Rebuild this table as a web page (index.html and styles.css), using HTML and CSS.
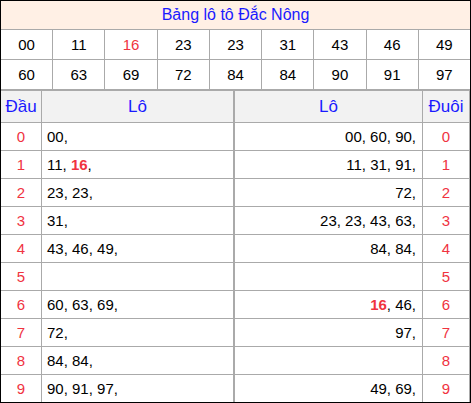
FILE: index.html
```html
<!DOCTYPE html>
<html>
<head>
<meta charset="utf-8">
<link rel="stylesheet" href="styles.css">
</head>
<body>
<div class="box">
  <div class="title">Bảng lô tô Đắc Nông</div>
  <div class="nums">
    <div>00</div><div>11</div><div class="red">16</div><div>23</div><div>23</div><div>31</div><div>43</div><div>46</div><div>49</div>
    <div>60</div><div>63</div><div>69</div><div>72</div><div>84</div><div>84</div><div>90</div><div>91</div><div>97</div>
  </div>
  <div class="lo">
    <div class="hd">Đầu</div><div class="hd">Lô</div><div class="hd">Lô</div><div class="hd">Đuôi</div>

    <div class="k">0</div><div class="l">00,</div><div class="r">00, 60, 90,</div><div class="k">0</div>
    <div class="k">1</div><div class="l">11, <b>16</b>,</div><div class="r">11, 31, 91,</div><div class="k">1</div>
    <div class="k">2</div><div class="l">23, 23,</div><div class="r">72,</div><div class="k">2</div>
    <div class="k">3</div><div class="l">31,</div><div class="r">23, 23, 43, 63,</div><div class="k">3</div>
    <div class="k">4</div><div class="l">43, 46, 49,</div><div class="r">84, 84,</div><div class="k">4</div>
    <div class="k">5</div><div class="l"></div><div class="r"></div><div class="k">5</div>
    <div class="k">6</div><div class="l">60, 63, 69,</div><div class="r"><b>16</b>, 46,</div><div class="k">6</div>
    <div class="k">7</div><div class="l">72,</div><div class="r">97,</div><div class="k">7</div>
    <div class="k">8</div><div class="l">84, 84,</div><div class="r"></div><div class="k">8</div>
    <div class="k">9</div><div class="l">90, 91, 97,</div><div class="r">49, 69,</div><div class="k">9</div>
  </div>
</div>
</body>
</html>
```
FILE: styles.css
```css
html, body {
  margin: 0;
  padding: 0;
  background: #fff;
}
body {
  font-family: "Liberation Sans", Arial, sans-serif;
  color: #000;
}
.box {
  width: 469px;
  height: 401px;
  border: 1px solid #000;
  overflow: hidden;
  background: #aaa;
}
.title {
  height: 28px;
  line-height: 28px;
  background: #fff0e5;
  color: #1a1aff;
  font-size: 16px;
  text-align: center;
  margin-bottom: 1px;
}
.nums {
  display: grid;
  grid-template-columns: repeat(9, 1fr);
  grid-auto-rows: 29px;
  gap: 1px;
  margin-bottom: 2px;
}
.nums div {
  background: #fff;
  font-size: 15px;
  line-height: 29px;
  text-align: center;
}
.nums .red { color: #f0333f; }
.lo {
  display: grid;
  grid-template-columns: 40px 192px 187px 46px;
  grid-template-rows: 31px repeat(10, 27px);
  column-gap: 1px;
  row-gap: 1px;
}
.lo > div:nth-child(4n+2) { margin-right: 1px; }
.lo .hd {
  background: #f2f2f2;
  color: #1a1aff;
  font-size: 17px;
  line-height: 31px;
  text-align: center;
}
.lo > div:nth-child(4n+2) + div { }
.lo .k {
  background: #fff;
  color: #f0333f;
  font-size: 15px;
  line-height: 27px;
  text-align: center;
}
.lo .l, .lo .r {
  background: #fff;
  font-size: 15px;
  line-height: 27px;
}
.lo .l { padding-left: 5px; }
.lo .r { text-align: right; padding-right: 6px; }
.lo b { color: #f0333f; }
```
